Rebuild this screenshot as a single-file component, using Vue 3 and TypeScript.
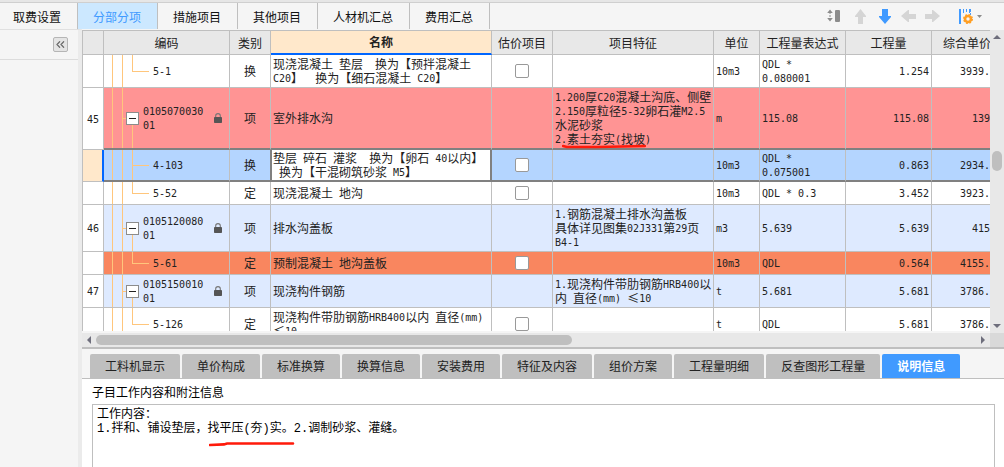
<script setup lang="ts">
import { h, ref } from 'vue'
import type { FunctionalComponent } from 'vue'

interface Row {
  no: string
  code: string
  kind: string
  name: string
  check: boolean
  feature: string
  marked?: string
  unit: string
  expr: string
  qty: string
  price: string
  tone: string
  last?: boolean
}

// Splits mixed text so that half-width characters take half of a full-width cell.
const Mixed: FunctionalComponent<{ text: string }> = (props) =>
  h(
    'span',
    { class: 'mixed' },
    (props.text.match(/[\x20-\x7e]+|[^\x20-\x7e]+/g) ?? []).map((run) =>
      /^[\x20-\x7e]/.test(run) ? h('span', { class: 'half' }, run) : run,
    ),
  )
Mixed.props = ['text']

const views = ['取费设置', '分部分项', '措施项目', '其他项目', '人材机汇总', '费用汇总']
const activeView = ref('分部分项')

const details = [
  '工料机显示', '单价构成', '标准换算', '换算信息', '安装费用',
  '特征及内容', '组价方案', '工程量明细', '反查图形工程量', '说明信息',
]
const activeDetail = ref('说明信息')

const rows: Row[] = [
  { no: '', code: '5-1', kind: '换', name: '现浇混凝土 垫层  换为【预拌混凝土\nC20】  换为【细石混凝土 C20】', check: true, feature: '', unit: '10m3', expr: 'QDL *\n0.080001', qty: '1.254', price: '3939.', tone: 'plain', last: true },
  { no: '45', code: '0105070030\n01', kind: '项', name: '室外排水沟', check: false, feature: '1.200厚C20混凝土沟底、侧壁\n2.150厚粒径5-32卵石灌M2.5\n水泥砂浆\n', marked: '2.素土夯实(找坡)', unit: 'm', expr: '115.08', qty: '115.08', price: '139', tone: 'red' },
  { no: '', code: '4-103', kind: '换', name: '垫层 碎石 灌浆  换为【卵石 40以内】\n 换为【干混砌筑砂浆 M5】', check: true, feature: '', unit: '10m3', expr: 'QDL *\n0.075001', qty: '0.863', price: '2934.', tone: 'selected' },
  { no: '', code: '5-52', kind: '定', name: '现浇混凝土 地沟', check: true, feature: '', unit: '10m3', expr: 'QDL * 0.3', qty: '3.452', price: '3923.', tone: 'plain', last: true },
  { no: '46', code: '0105120080\n01', kind: '项', name: '排水沟盖板', check: false, feature: '1.钢筋混凝土排水沟盖板\n具体详见图集02J331第29页\nB4-1', unit: 'm3', expr: '5.639', qty: '5.639', price: '415', tone: 'blue' },
  { no: '', code: '5-61', kind: '定', name: '预制混凝土 地沟盖板', check: true, feature: '', unit: '10m3', expr: 'QDL', qty: '0.564', price: '4155.', tone: 'orange', last: true },
  { no: '47', code: '0105150010\n01', kind: '项', name: '现浇构件钢筋', check: false, feature: '1.现浇构件带肋钢筋HRB400以\n内 直径(mm) ≤10', unit: 't', expr: '5.681', qty: '5.681', price: '3786.', tone: 'blue' },
  { no: '', code: '5-126', kind: '定', name: '现浇构件带肋钢筋HRB400以内 直径(mm)\n≤10', check: true, feature: '', unit: 't', expr: 'QDL', qty: '5.681', price: '3786.', tone: 'plain', last: true },
]

const note = ref('工作内容：\n1.拌和、铺设垫层，找平压(夯)实。2.调制砂浆、灌缝。')
</script>

<template>
  <div class="app">
    <header class="topbar">
      <nav class="views">
        <button
          v-for="v in views"
          :key="v"
          type="button"
          :class="{ active: v === activeView }"
          @click="activeView = v"
        >{{ v }}</button>
      </nav>
      <div class="tools">
        <button type="button" class="resize">
          <svg width="14" height="14" viewBox="0 0 14 14">
            <path d="M3 0.5 L5.8 4 H0.2 Z M3 12.5 L0.2 9 H5.8 Z" fill="#8c8c8c" />
            <path d="M3 3 V10" stroke="#8c8c8c" stroke-dasharray="2 1" />
            <rect x="8" y="1" width="5" height="12" rx="1" fill="#8c8c8c" />
          </svg>
        </button>
        <button type="button">
          <svg width="15" height="15" viewBox="0 0 15 15"><path d="M7.5 0 L13 7 V8 H10 V15 H5 V8 H2 V7 Z" fill="#d5d5d5" /></svg>
        </button>
        <button type="button">
          <svg width="15" height="15" viewBox="0 0 15 15"><path d="M5 0 H11 V7 H14 V8 L8 15 L2 8 V7 H5 Z" fill="#409aff" /></svg>
        </button>
        <button type="button">
          <svg width="15" height="12" viewBox="0 0 15 12"><path d="M0 6 L7 0 H8 V4 H15 V9 H8 V12 H7 Z" fill="#d5d5d5" /></svg>
        </button>
        <button type="button">
          <svg width="15" height="12" viewBox="0 0 15 12"><path d="M15 6 L8 0 H7 V4 H0 V9 H7 V12 H8 Z" fill="#d5d5d5" /></svg>
        </button>
        <button type="button" class="columns">
          <svg width="25" height="15" viewBox="0 0 25 15">
            <path d="M2 0 V15" stroke="#409aff" stroke-width="2" />
            <path d="M5.5 0 V4 M8.5 0 V3 M11.5 0 V4" stroke="#409aff" />
            <path d="M12.5 0 V6" stroke="#409aff" stroke-dasharray="3 1" />
            <circle cx="10" cy="10" r="3" fill="none" stroke="#ff9f24" stroke-width="2.6" />
            <circle cx="10" cy="10" r="4.2" fill="none" stroke="#ff9f24" stroke-width="1.6" stroke-dasharray="1.8 1.5" />
            <path d="M19 6 H24 L21.5 9 Z" fill="#8c8c8c" />
          </svg>
        </button>
      </div>
    </header>

    <div class="body">
      <aside class="side">
        <div class="side-head">
          <button type="button" class="collapse">
            <svg width="9" height="7" viewBox="0 0 9 7"><path d="M4 0.3 L1 3.5 L4 6.7 M8 0.3 L5 3.5 L8 6.7" fill="none" stroke="#666" stroke-width="1.2" /></svg>
          </button>
        </div>
      </aside>

      <main class="main">
        <section class="grid">
          <div class="viewport">
            <table>
              <colgroup>
                <col class="w-no" /><col class="w-code" /><col class="w-kind" /><col />
                <col class="w-check" /><col class="w-feature" /><col class="w-unit" />
                <col class="w-expr" /><col class="w-qty" /><col class="w-price" />
              </colgroup>
              <thead>
                <tr>
                  <th></th>
                  <th>编码</th>
                  <th>类别</th>
                  <th class="current">名称</th>
                  <th id="estimate">估价项目</th>
                  <th>项目特征</th>
                  <th>单位</th>
                  <th>工程量表达式</th>
                  <th>工程量</th>
                  <th class="cut">综合单价</th>
                </tr>
              </thead>
              <tbody>
                <tr v-for="(r, i) in rows" :key="i" :class="r.tone">
                  <td class="no"><Mixed :text="r.no" /></td>
                  <td class="code" :class="[r.no ? 'parent' : 'child', { last: r.last }]">
                    <div class="code-line">
                      <button v-if="r.no" type="button" class="fold"></button>
                      <Mixed :text="r.code" />
                      <svg v-if="r.no" width="8" height="10" viewBox="0 0 8 10">
                        <path d="M1.7 5 V2.8 A2.3 2.2 0 0 1 6.3 2.8 V5" fill="none" stroke="#777" stroke-width="1.1" />
                        <rect x="0" y="4" width="8" height="6" rx="0.8" fill="#555" />
                      </svg>
                    </div>
                  </td>
                  <td class="kind">{{ r.kind }}</td>
                  <td class="name"><Mixed :text="r.name" /></td>
                  <td class="check"><input v-if="r.check" type="checkbox" aria-labelledby="estimate" /></td>
                  <td>
                    <Mixed :text="r.feature" />
                    <span v-if="r.marked" class="marked">
                      <Mixed :text="r.marked" />
                      <svg class="stroke" width="84" height="5" viewBox="0 0 84 5"><path d="M1 2 L5 3 H36 L83 2" fill="none" stroke="#ff1a0a" stroke-width="2.4" stroke-linecap="round" /></svg>
                    </span>
                  </td>
                  <td><Mixed :text="r.unit" /></td>
                  <td><Mixed :text="r.expr" /></td>
                  <td class="num"><Mixed :text="r.qty" /></td>
                  <td class="num cut"><Mixed :text="r.price" /></td>
                </tr>
              </tbody>
            </table>
          </div>
          <div class="vbar">
            <svg width="14" height="14" viewBox="0 0 14 14"><path d="M7 5 L11 9 H3 Z" fill="#6e6e7c" /></svg>
            <span class="before"></span>
            <span class="thumb"></span>
            <span class="after"></span>
            <svg width="14" height="14" viewBox="0 0 14 14"><path d="M7 9 L11 5 H3 Z" fill="#6e6e7c" /></svg>
          </div>
          <div class="hbar">
            <svg width="13" height="14" viewBox="0 0 13 14"><path d="M4 7 L8 3 V11 Z" fill="#6e6e7c" /></svg>
            <div class="track"><span class="thumb"></span></div>
            <svg width="12" height="14" viewBox="0 0 12 14"><path d="M7 7 L3 3 V11 Z" fill="#6e6e7c" /></svg>
          </div>
          <div class="corner"></div>
        </section>

        <section class="details">
          <nav class="detail-tabs">
            <button
              v-for="d in details"
              :key="d"
              type="button"
              :class="{ active: d === activeDetail }"
              @click="activeDetail = d"
            >{{ d }}</button>
          </nav>
          <div class="note">
            <label for="note">子目工作内容和附注信息</label>
            <div class="note-box">
              <textarea id="note" v-model="note" readonly></textarea>
              <svg class="stroke" width="86" height="6" viewBox="0 0 86 6"><path d="M1 4 L15 3.4 L18 2.5 H84" fill="none" stroke="#ff1a0a" stroke-width="2.6" stroke-linecap="round" /></svg>
            </div>
          </div>
        </section>
      </main>
    </div>
  </div>
</template>

<style>
body {
  margin: 0;
  background: #f5f5f5;
}
.mixed {
  white-space: pre;
}
.half {
  font-family: "DejaVu Sans Mono", monospace;
  font-size: 10px;
  line-height: 0;
  vertical-align: 1px;
}
</style>

<style scoped>
.app {
  display: flex;
  flex-direction: column;
  height: 100vh;
  overflow: hidden;
  background: #f5f5f5;
  color: #222;
  font-family: "Noto Sans CJK SC", sans-serif;
  font-size: 12px;
  line-height: 14px;
  text-spacing-trim: space-all;
}
button {
  margin: 0;
  padding: 0;
  border: 0;
  background: none;
  color: inherit;
  font: inherit;
}
svg {
  display: block;
}

.topbar {
  display: flex;
  flex: none;
  justify-content: space-between;
  height: 26px;
  border-top: 1px solid #cfcfcf;
  box-shadow: 0 -2px #e6e6e6;
  margin-top: 2px;
}
.views {
  display: flex;
}
.views button {
  padding: 2px 16px 0 15px;
  border-right: 1px solid #bfbfbf;
  color: #111;
}
.views button:first-child {
  padding-left: 13px;
}
.views button.active {
  background: #cce8ff;
  color: #409aff;
}
.tools {
  display: flex;
  align-items: center;
  gap: 9px;
  padding-right: 21px;
}
.tools .resize {
  margin-right: 3px;
}
.tools .columns {
  margin-left: 9px;
}

.body {
  display: flex;
  flex: 1;
  min-height: 0;
}
.side {
  flex: none;
  width: 78px;
  border-top: 1px solid #e0e0e0;
  border-right: 4px solid #ebebeb;
}
.side-head {
  display: flex;
  justify-content: flex-end;
  padding: 7px 10px 7px 0;
  border-bottom: 1px solid #dcdcdc;
}
.collapse {
  display: grid;
  place-items: center;
  width: 15px;
  height: 15px;
  border: 1px solid #b5b5b5;
  border-radius: 2px;
  background: #e4e4e4;
}
.main {
  display: flex;
  flex: 1;
  flex-direction: column;
  min-width: 0;
  padding-top: 1px;
}

.grid {
  display: grid;
  flex: 1;
  grid-template-columns: minmax(0, 1fr) 14px;
  grid-template-rows: minmax(0, 1fr) 14px;
  min-height: 0;
  border-bottom: 2px solid #bfbfbf;
}
.viewport {
  overflow: hidden;
  margin-bottom: 2px;
  border-top: 1px solid #bfbfbf;
  border-left: 1px solid #bfbfbf;
  background: #fff;
}
table {
  width: 100%;
  table-layout: fixed;
  border-spacing: 0;
}
.w-no { width: 21px; }
.w-code { width: 126px; }
.w-kind { width: 41px; }
.w-check { width: 61px; }
.w-feature { width: 161px; }
.w-unit { width: 46px; }
.w-expr,
.w-qty { width: 86px; }
.w-price { width: 58px; }

th,
td {
  box-sizing: border-box;
  padding: 2px;
  border-right: 1px solid #bfbfbf;
  border-bottom: 1px solid #bfbfbf;
  text-align: left;
  vertical-align: middle;
}
th {
  height: 24px;
  padding: 0;
  background: #e8e8e8;
  font-weight: 400;
  text-align: center;
}
th.current {
  border-bottom: 2px solid #0066ff;
  background: #ffe8cb;
  font-weight: 700;
}
td {
  height: 23px;
  background-color: var(--tone);
}
.plain { --tone: #fff; }
.red { --tone: #ff9494; }
.blue { --tone: #deeaff; }
.orange { --tone: #f9865f; }
.selected { --tone: #b4d5ff; }

td.no {
  padding: 0;
  background-color: #fff;
  text-align: center;
}
td.kind,
td.check {
  text-align: center;
}
td.num {
  text-align: right;
}
th.cut {
  padding-left: 11px;
  border-right: 0;
  text-align: left;
  white-space: nowrap;
}
td.cut {
  padding-right: 0;
  border-right: 0;
}
.red td:not(.no),
.selected td:not(.no) {
  border-bottom: 2px solid #808080;
}
.selected td {
  padding-top: 1px;
  padding-bottom: 1px;
}
.selected td.no {
  border-right: 2px solid #0066ff;
  background-color: #ffe8cb;
}
.selected td.kind {
  border-right-color: #808080;
}
.selected td.name {
  border-right: 2px solid #808080;
  border-left: 1px solid #808080;
  padding-left: 1px;
  background-color: #fff;
}

/* Tree guides: two ancestor lines, then the branch of the row itself. */
td.code {
  --guide: linear-gradient(#ffc67c, #ffc67c);
  padding-left: 0;
  background-repeat: no-repeat;
}
td.parent {
  background-image: var(--guide), var(--guide), var(--guide), var(--guide);
  background-position: 8px 0, 18px 0, 18px 50%, 28px 100%;
  background-size: 1px 100%, 1px 100%, 5px 1px, 1px 50%;
}
td.child {
  background-image: var(--guide), var(--guide), var(--guide), var(--guide);
  background-position: 8px 0, 18px 0, 28px 50%, 28px 0;
  background-size: 1px 100%, 1px 100%, 17px 1px, 1px 100%;
}
td.child.last {
  background-size: 1px 100%, 1px 100%, 17px 1px, 1px 50%;
}
.code-line {
  display: flex;
  align-items: center;
  padding-left: 49px;
}
.parent .code-line {
  padding-left: 22px;
}
.fold {
  display: grid;
  place-items: center;
  width: 13px;
  height: 13px;
  margin-right: 4px;
  border: 1px solid #8c8c8c;
  background: #fff;
}
.fold::before {
  content: "";
  width: 7px;
  height: 1px;
  background: #222;
}
.code-line svg {
  margin-left: 11px;
}
input[type="checkbox"] {
  appearance: none;
  display: block;
  box-sizing: border-box;
  width: 14px;
  height: 14px;
  margin: 0 auto;
  border: 1px solid #999;
  border-radius: 2px;
  background: #fff;
}
input[type="checkbox"]:checked {
  background: #409aff;
}
.marked {
  position: relative;
}
.marked .stroke {
  position: absolute;
  top: 14px;
  left: 7px;
}

.vbar {
  display: flex;
  flex-direction: column;
  align-items: center;
  background: #e8e8e8;
}
.vbar .before { flex: 107; }
.vbar .after { flex: 149; }
.thumb {
  border-radius: 5px;
  background: #bfbfbf;
}
.vbar .thumb {
  width: 10px;
  height: 20px;
}
.hbar {
  display: flex;
  align-items: center;
  padding-left: 1px;
  background: #e8e8e8;
}
.track {
  display: flex;
  flex: 1;
}
.track .thumb {
  width: 54%;
  height: 10px;
}
.corner {
  background: #d9d9d9;
}

.details {
  display: flex;
  flex: none;
  flex-direction: column;
  height: 118px;
}
.detail-tabs {
  display: flex;
  gap: 2px;
  padding: 5px 0 0 8px;
  border-bottom: 1px solid #bfbfbf;
}
.detail-tabs button {
  height: 24px;
  padding: 0 15px;
  border-radius: 2px 2px 0 0;
  background: #bfbfbf;
  white-space: nowrap;
}
.detail-tabs button.active {
  background: #409aff;
  color: #fff;
  font-weight: 700;
}
.note {
  display: flex;
  flex: 1;
  flex-direction: column;
  gap: 5px;
  padding: 6px 9px 0 10px;
  background: #fff;
  color: #000;
}
.note-box {
  position: relative;
  display: flex;
  flex: 1;
}
textarea {
  box-sizing: border-box;
  flex: 1;
  min-width: 0;
  margin: 0;
  padding: 3px 4px;
  border: 1px solid #bfbfbf;
  border-bottom: 0;
  border-radius: 0;
  background: #fff;
  color: #000;
  font: 12px/14px "Liberation Mono", "Noto Sans CJK SC", monospace;
  resize: none;
  outline: 0;
}
.note-box .stroke {
  position: absolute;
  top: 37px;
  left: 117px;
}
</style>
